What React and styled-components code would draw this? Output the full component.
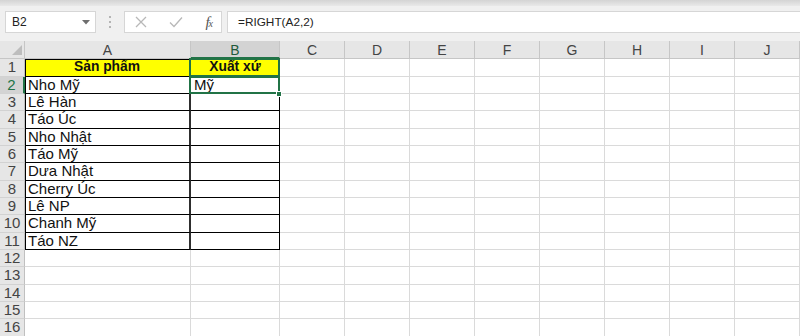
import React from "react";
import styled, { createGlobalStyle, css } from "styled-components";

const GREEN = "#217346";

const GlobalStyle = createGlobalStyle`
  html, body { margin: 0; padding: 0; background: #fff; overflow: hidden; }
  * { box-sizing: border-box; }
`;

const columns = [
  { key: "A", width: 166 },
  { key: "B", width: 89 },
  { key: "C", width: 65 },
  { key: "D", width: 65 },
  { key: "E", width: 65 },
  { key: "F", width: 65 },
  { key: "G", width: 65 },
  { key: "H", width: 65 },
  { key: "I", width: 65 },
  { key: "J", width: 65 },
];

const products = [
  "Nho Mỹ",
  "Lê Hàn",
  "Táo Úc",
  "Nho Nhật",
  "Táo Mỹ",
  "Dưa Nhật",
  "Cherry Úc",
  "Lê NP",
  "Chanh Mỹ",
  "Táo NZ",
];

const ROWS = 16;

const Frame = styled.div`
  width: 800px;
  height: 336px;
  overflow: hidden;
  display: flex;
  flex-direction: column;
  background: #fff;
  font-family: "Liberation Sans", Arial, sans-serif;
`;

const RibbonEdge = styled.div`
  height: 6px;
  flex-shrink: 0;
  background: linear-gradient(#d4d4d4, #e9e9e9);
`;

const FormulaBar = styled.div`
  height: 35px;
  flex-shrink: 0;
  display: flex;
  align-items: flex-start;
  padding: 5px 0 0 5px;
  background: #f0f0f0;
`;

const Box = styled.div`
  height: 22px;
  background: #fff;
  border: 1px solid #d6d6d6;
  display: flex;
  align-items: center;
`;

const NameBox = styled(Box)`
  width: 91px;
  padding: 0 5px 0 6px;
  justify-content: space-between;
  font-size: 12px;
  color: #222;
`;

const Dots = styled.div`
  width: 28px;
  height: 22px;
  display: flex;
  flex-direction: column;
  align-items: center;
  justify-content: center;
  gap: 3px;

  span {
    width: 2px;
    height: 2px;
    background: #b4b4b4;
  }
`;

const FxGroup = styled(Box)`
  width: 98px;
  padding: 0 9px 0 10px;
  justify-content: space-between;
`;

const FxLabel = styled.span`
  font-family: "Liberation Serif", "Times New Roman", serif;
  font-style: italic;
  font-size: 15px;
  color: #555;
  letter-spacing: -1px;

  small {
    font-size: 10px;
  }
`;

const FormulaInput = styled(Box)`
  flex: 1;
  margin-left: 5px;
  margin-right: -2px;
  padding-left: 10px;
  font-size: 11.8px;
  color: #222;
`;

const Sheet = styled.div`
  display: grid;
  grid-template-columns: 25px ${columns.map((c) => `${c.width}px`).join(" ")};
  grid-template-rows: 18.3px repeat(${ROWS}, 17.33px);
`;

const Corner = styled.div`
  background: #e6e6e6;
  border-right: 1px solid #c6c6c6;
  border-bottom: 1px solid #c6c6c6;
  display: flex;
  align-items: flex-end;
  justify-content: flex-end;
  padding: 0 2px 3px 0;
`;

const ColHeader = styled.div`
  background: ${(p) => (p.$active ? "#d3d3d3" : "#e6e6e6")};
  border-right: 1px solid #c6c6c6;
  border-bottom: ${(p) => (p.$active ? `2px solid ${GREEN}` : "1px solid #c6c6c6")};
  color: ${(p) => (p.$active ? "#1f5a3a" : "#444")};
  font-size: 14px;
  display: flex;
  align-items: center;
  justify-content: center;
  padding-top: 1px;
`;

const RowHeader = styled.div`
  background: ${(p) => (p.$active ? "#d3d3d3" : "#e6e6e6")};
  border-right: ${(p) => (p.$active ? `2px solid ${GREEN}` : "1px solid #c0c0c0")};
  border-bottom: 1px solid #d2d2d2;
  color: ${(p) => (p.$active ? GREEN : "#444")};
  font-size: 15px;
  line-height: 16px;
  text-align: center;
`;

const Cell = styled.div`
  position: relative;
  padding: 0 3px;
  background: ${(p) => p.$fill || "#fff"};
  border-right: ${(p) =>
    p.$thickRight ? "2px solid #2e2e2e" : p.$boxed ? "1px solid #000" : "1px solid #dadada"};
  border-bottom: 1px solid ${(p) => (p.$boxed ? "#000" : "#dadada")};
  box-shadow: ${(p) =>
    [p.$leftEdge && "inset 1px 0 #000", p.$topEdge && "inset 0 1px #000"]
      .filter(Boolean)
      .join(", ") || "none"};
  font-size: ${(p) => (p.$bold ? "13.8px" : "15px")};
  font-weight: ${(p) => (p.$bold ? 700 : 400)};
  line-height: 16.3px;
  text-align: ${(p) => (p.$bold ? "center" : "left")};
  color: #111;
  white-space: nowrap;

  ${(p) =>
    p.$selected &&
    css`
      &::after {
        content: "";
        position: absolute;
        top: -1px;
        left: -2px;
        right: -1px;
        bottom: -1px;
        border: 2px solid ${GREEN};
        pointer-events: none;
      }
    `}
`;

const FillHandle = styled.span`
  position: absolute;
  right: -3px;
  bottom: -4px;
  width: 6px;
  height: 6px;
  background: ${GREEN};
  border: 1px solid #fff;
  z-index: 2;
`;

const XIcon = () => (
  <svg width="12" height="12" viewBox="0 0 12 12">
    <path d="M1 1 L11 11 M11 1 L1 11" stroke="#b8b8b8" strokeWidth="1.3" fill="none" />
  </svg>
);

const CheckIcon = () => (
  <svg width="14" height="12" viewBox="0 0 14 12">
    <path d="M1 6.5 L5 10.5 L13 1.5" stroke="#b8b8b8" strokeWidth="1.3" fill="none" />
  </svg>
);

const Caret = () => (
  <svg width="8" height="5" viewBox="0 0 8 5">
    <path d="M0 0 H8 L4 4.5 Z" fill="#6e6e6e" />
  </svg>
);

const CornerMark = () => (
  <svg width="10" height="10" viewBox="0 0 10 10">
    <path d="M10 0 V10 H0 Z" fill="#bdbdbd" />
  </svg>
);

const cellText = (row, col) => {
  if (row === 1 && col === "A") return "Sản phẩm";
  if (row === 1 && col === "B") return "Xuất xứ";
  if (col === "A" && row >= 2 && row <= 11) return products[row - 2];
  if (col === "B" && row === 2) return "Mỹ";
  return "";
};

export default function App() {
  const rows = Array.from({ length: ROWS }, (_, i) => i + 1);

  return (
    <Frame>
      <GlobalStyle />
      <RibbonEdge />
      <FormulaBar>
        <NameBox>
          <span>B2</span>
          <Caret />
        </NameBox>
        <Dots>
          <span />
          <span />
          <span />
        </Dots>
        <FxGroup>
          <XIcon />
          <CheckIcon />
          <FxLabel>
            f<small>x</small>
          </FxLabel>
        </FxGroup>
        <FormulaInput>=RIGHT(A2,2)</FormulaInput>
      </FormulaBar>

      <Sheet>
        <Corner>
          <CornerMark />
        </Corner>
        {columns.map((c) => (
          <ColHeader key={c.key} $active={c.key === "B"}>
            {c.key}
          </ColHeader>
        ))}

        {rows.map((r) => (
          <React.Fragment key={r}>
            <RowHeader $active={r === 2}>{r}</RowHeader>
            {columns.map((c) => {
              const inTable = r <= 11 && (c.key === "A" || c.key === "B");
              const selected = c.key === "B" && (r === 1 || r === 2);
              return (
                <Cell
                  key={c.key}
                  $boxed={inTable}
                  $thickRight={inTable && c.key === "A"}
                  $leftEdge={inTable && c.key === "A"}
                  $topEdge={inTable && r === 1}
                  $fill={inTable && r === 1 ? "#ffff00" : undefined}
                  $bold={r === 1 && inTable}
                  $selected={selected}
                >
                  {cellText(r, c.key)}
                  {c.key === "B" && r === 2 && <FillHandle />}
                </Cell>
              );
            })}
          </React.Fragment>
        ))}
      </Sheet>
    </Frame>
  );
}
